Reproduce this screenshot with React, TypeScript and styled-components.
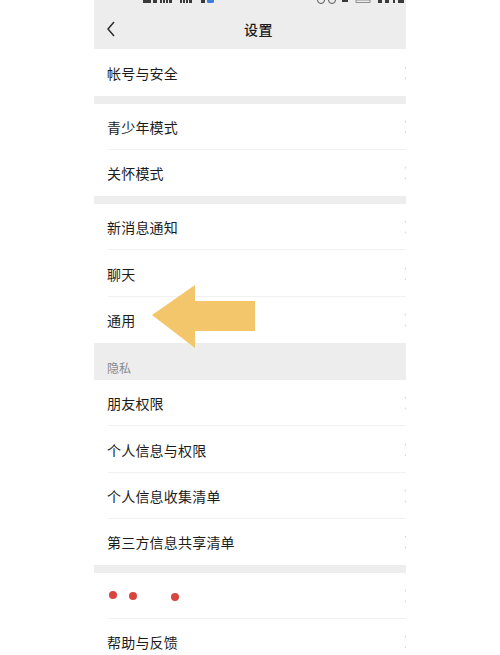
import * as React from 'react'
import styled, { createGlobalStyle } from 'styled-components'

const Global = createGlobalStyle`
  html, body {
    margin: 0;
    padding: 0;
    background: #fff;
    overflow: hidden;
  }
  body {
    font-family: "Noto Sans CJK SC", "Noto Sans", sans-serif;
  }
`

const Page = styled.div`
  width: 500px;
  height: 655px;
  display: flex;
  justify-content: center;
  align-items: flex-start;
  overflow: hidden;
`

const Screen = styled.div`
  position: relative;
  width: 312px;
  flex: none;
`

const Header = styled.header`
  background: #ededed;
  height: 49px;
  display: flex;
  flex-direction: column;
`

const StatusStrip = styled.svg`
  display: block;
  width: 312px;
  height: 5px;
  flex: none;
`

const NavBar = styled.div`
  flex: 1;
  display: grid;
  grid-template-columns: 40px 1fr 40px;
  align-items: center;
  padding-top: 3px;
`

const Back = styled.svg`
  width: 10px;
  height: 16px;
  margin: 0 0 0 12px;
`

const Title = styled.h1`
  margin: 0 0 0 17px;
  text-align: center;
  font-size: 14px;
  font-weight: 500;
  color: #1a1a1a;
  letter-spacing: 0.5px;
`

const Gap = styled.div`
  height: 8px;
  background: #ededed;
`

const SectionTitle = styled.div`
  height: 37px;
  background: #ededed;
  display: flex;
  align-items: flex-end;
  padding: 0 0 4px 13px;
  box-sizing: border-box;
  font-size: 12px;
  color: #8a8a8a;
`

const Row = styled.div<{ $last?: boolean; $h?: number }>`
  height: ${p => p.$h ?? 46}px;
  display: flex;
  align-items: center;
  padding-left: 13px;
  box-sizing: border-box;
  overflow: hidden;
  position: relative;
  &::after {
    content: '';
    display: ${p => (p.$last ? 'none' : 'block')};
    position: absolute;
    left: 14px;
    right: 0;
    bottom: 0;
    height: 1px;
    background: #f1f1f1;
  }
`

const Label = styled.span`
  flex: 1;
  font-size: 14px;
  color: #1c1c1c;
  letter-spacing: 0.2px;
`

const Chevron = styled.svg`
  width: 8px;
  height: 14px;
  margin-right: -6px;
  flex: none;
`

const Dots = styled.svg`
  flex: 1;
  height: 12px;
`

const Arrow = styled.svg`
  position: absolute;
  left: 58px;
  top: 285px;
  width: 104px;
  height: 64px;
`

const Group = ({ items, h }: { items: React.ReactNode[]; h?: number }) => (
  <>
    {items.map((it, i) => (
      <Row key={i} $h={h} $last={i === items.length - 1}>
        {typeof it === 'string' ? <Label>{it}</Label> : it}
        <Chevron viewBox="0 0 8 14">
          <path d="M1 1 L7 7 L1 13" fill="none" stroke="#d6d6d6" strokeWidth="1.4" />
        </Chevron>
      </Row>
    ))}
  </>
)

export default function App() {
  return (
    <Page>
      <Global />
      <Screen>
        <Header>
          <StatusStrip viewBox="0 0 312 5">
            <g fill="#3a3a3a">
              <rect x="49" y="0" width="8" height="3" />
              <rect x="59" y="0" width="4" height="3" />
              <rect x="66" y="0" width="2" height="3" />
              <rect x="69" y="0" width="2" height="3" />
              <rect x="72" y="0" width="2" height="3" />
              <rect x="75" y="0" width="3" height="3" />
              <rect x="86" y="0" width="2" height="3" />
              <rect x="89" y="0" width="2" height="3" />
              <rect x="92" y="0" width="2" height="3" />
              <rect x="95" y="0" width="3" height="3" />
              <rect x="107" y="0" width="4" height="3" />
              <circle cx="227" cy="0" r="3.5" fill="none" stroke="#555" strokeWidth="1" />
              <circle cx="238" cy="0" r="3.5" fill="none" stroke="#555" strokeWidth="1" />
              <rect x="248" y="0" width="6" height="2" />
              <rect x="262" y="0" width="14" height="2.5" fill="none" stroke="#777" strokeWidth="0.8" />
              <rect x="284" y="0" width="4" height="3" />
              <rect x="291" y="0" width="4" height="3" />
              <rect x="299" y="0" width="2" height="3" />
              <rect x="304" y="0" width="6" height="3" />
            </g>
            <rect x="113" y="-3" width="7" height="6" rx="1.5" fill="#3d7fe0" />
          </StatusStrip>
          <NavBar>
            <Back viewBox="0 0 10 16">
              <path d="M8 1 L2 8 L8 15" fill="none" stroke="#2b2b2b" strokeWidth="1.5" />
            </Back>
            <Title>设置</Title>
            <span />
          </NavBar>
        </Header>

        <Group h={47} items={['帐号与安全']} />
        <Gap />
        <Group items={['青少年模式', '关怀模式']} />
        <Gap />
        <Group items={['新消息通知', '聊天', '通用']} h={46.4} />
        <SectionTitle>隐私</SectionTitle>
        <Group items={['朋友权限', '个人信息与权限', '个人信息收集清单', '第三方信息共享清单']} h={46.3} />
        <Gap />
        <Group
          items={[
            <Dots key="d" viewBox="0 0 290 12" preserveAspectRatio="xMinYMid meet">
              <g fill="#d9463f">
                <circle cx="6" cy="5" r="4" />
                <circle cx="26" cy="6" r="4" />
                <circle cx="68" cy="7" r="4" />
              </g>
            </Dots>,
            '帮助与反馈',
          ]}
        />

        <Arrow viewBox="0 0 104 64">
          <path d="M0 30 L43 0 L43 16 L103 16 L103 46 L43 46 L43 63 Z" fill="#f3c66c" />
        </Arrow>
      </Screen>
    </Page>
  )
}
